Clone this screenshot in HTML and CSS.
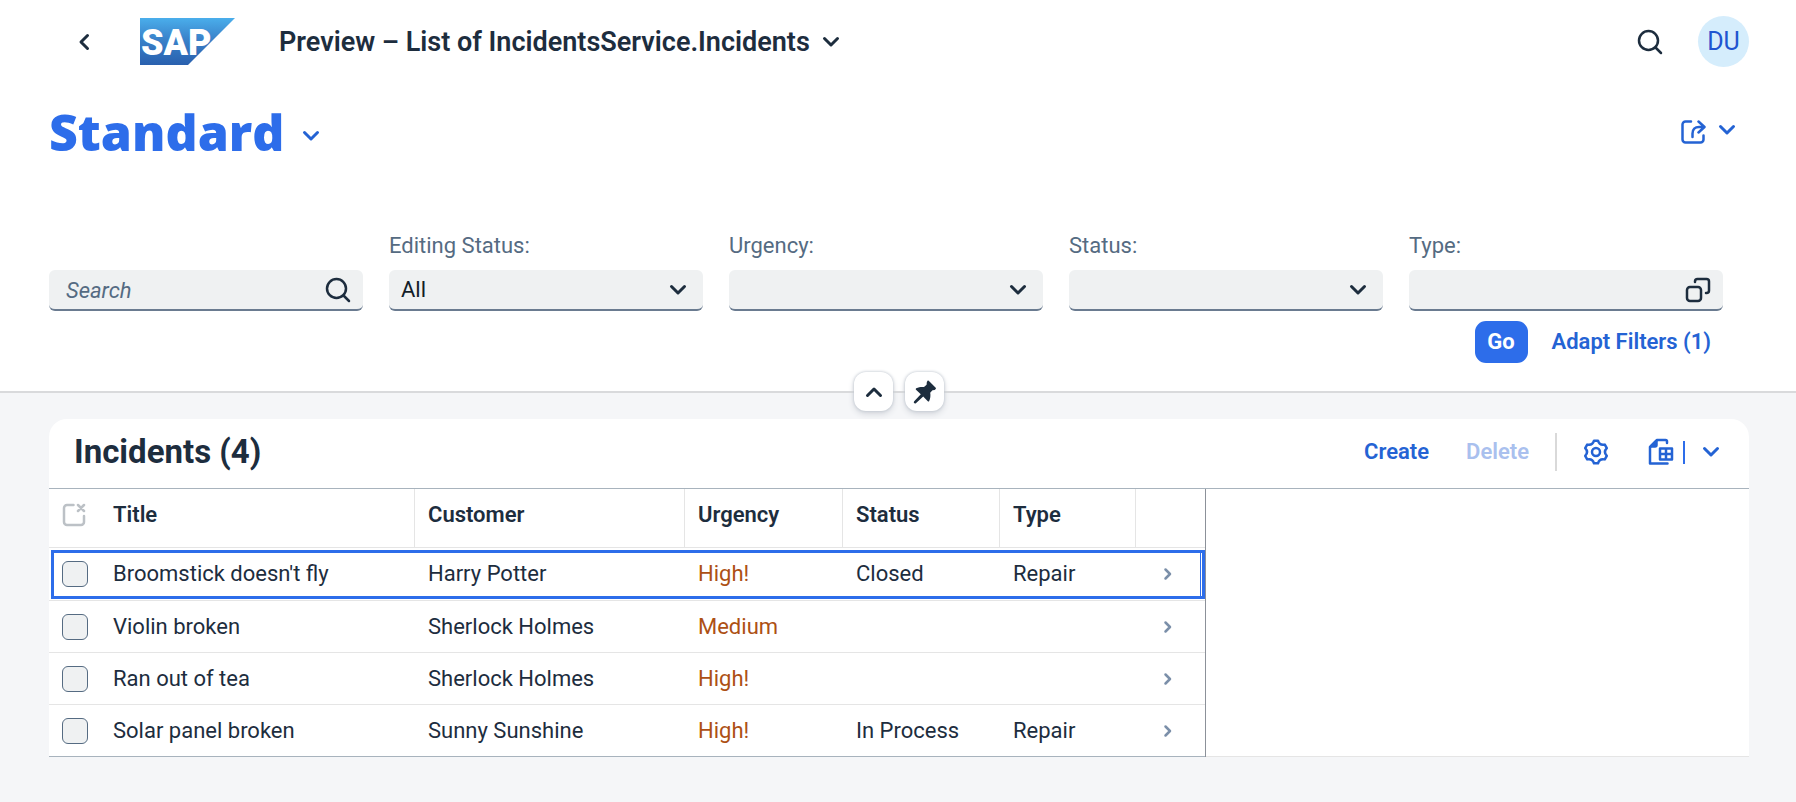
FILE: index.html
```html
<!DOCTYPE html>
<html lang="en">
<head>
<meta charset="utf-8">
<title>Preview – List of IncidentsService.Incidents</title>
<link rel="stylesheet" href="styles.css">
</head>
<body>
<svg class="defs" aria-hidden="true">
  <symbol id="chevron" viewBox="0 0 18 12"><path d="M2.500 2.500 9 9l6.500-6.500"/></symbol>
  <symbol id="search" viewBox="0 0 26 26"><circle cx="11.500" cy="11.500" r="9.500"/><path d="m18.500 18.500 5.500 5.500"/></symbol>
</svg>
<header class="shell">
  <button class="icon-btn back" aria-label="Back"><svg width="12" height="18" viewBox="0 0 12 18"><path d="M9.500 2.500 3 9l6.500 6.500"/></svg></button>
  <a class="logo" href="#" aria-label="SAP">
    <svg width="95" height="47" viewBox="0 0 95 47">
      <defs><linearGradient id="sap" x1="0" y1="0" x2="0" y2="1"><stop offset="0" stop-color="#4aaeeb"/><stop offset=".45" stop-color="#3a82ca"/><stop offset="1" stop-color="#2960ae"/></linearGradient></defs>
      <path class="logo-shape" fill="url(#sap)" d="M0 0h95L48 47H0z"/>
      <text class="logo-text" x="1" y="37">SAP</text>
    </svg>
  </a>
  <button class="app-title">Preview – List of IncidentsService.Incidents <svg width="18" height="12"><use href="#chevron"/></svg></button>
  <button class="icon-btn shell-search" aria-label="Search"><svg width="26" height="26"><use href="#search"/></svg></button>
  <button class="avatar">DU</button>
</header>

<section class="page-header">
  <div class="variant-row">
    <h1 class="variant">Standard</h1>
    <button class="icon-btn blue variant-arrow" aria-label="Select view"><svg width="18" height="12"><use href="#chevron"/></svg></button>
    <button class="icon-btn blue share" aria-label="Share">
      <svg width="26" height="26" viewBox="0 0 26 26"><path d="M11 2.500H5.500a3 3 0 0 0-3 3v15a3 3 0 0 0 3 3h15a3 3 0 0 0 3-3v-4M12.500 18v-3.500c0-4 2.500-6.500 6.500-6.500h4.500M18.500 2.500 24.500 8l-6 5.500"/></svg>
      <svg width="18" height="12"><use href="#chevron"/></svg>
    </button>
  </div>

  <form class="filters" onsubmit="return false">
    <div class="field search-field">
      <div class="control"><input class="input" type="search" placeholder="Search" aria-label="Search"><svg class="glyph" width="26" height="26"><use href="#search"/></svg></div>
    </div>
    <div class="field">
      <label for="editing">Editing Status:</label>
      <div class="control"><select class="input" id="editing"><option>All</option></select><svg class="glyph arrow" width="18" height="12"><use href="#chevron"/></svg></div>
    </div>
    <div class="field">
      <label for="urgency">Urgency:</label>
      <div class="control"><select class="input" id="urgency"><option></option></select><svg class="glyph arrow" width="18" height="12"><use href="#chevron"/></svg></div>
    </div>
    <div class="field">
      <label for="status">Status:</label>
      <div class="control"><select class="input" id="status"><option></option></select><svg class="glyph arrow" width="18" height="12"><use href="#chevron"/></svg></div>
    </div>
    <div class="field">
      <label for="type">Type:</label>
      <div class="control"><input class="input" id="type" type="text"><svg class="glyph" width="26" height="26" viewBox="0 0 26 26"><rect x="2" y="10" width="14" height="14" rx="3"/><path d="M10 5V4.500a2.500 2.500 0 0 1 2.500-2.500h9A2.500 2.500 0 0 1 24 4.500v9a2.500 2.500 0 0 1-2.500 2.500H21"/></svg></div>
    </div>
    <div class="filter-actions">
      <button class="go">Go</button>
      <button class="link-btn" type="button">Adapt Filters (1)</button>
    </div>
  </form>

  <div class="header-toggles">
    <button class="toggle" aria-label="Collapse header"><svg class="up" width="18" height="12"><use href="#chevron"/></svg></button>
    <button class="toggle" aria-label="Pin header"><svg class="pin" width="24" height="24" viewBox="0 0 24 24"><path d="M14.500.8q.6-.6 1.200 0l7 7q.6.600 0 1.200l-1 1-2.200.200-2.300 2.600c.5 2.800.200 5.500-1 8.200q-.6.900-1.400.200l-4.600-4.800-7.300 6.800q-1 .8-1.800-.1t.1-1.800l6.600-7L3 9.700q-.8-.8.200-1.400C6 7 8.300 6.700 11 7l2.600-2.200.2-2.600z"/></svg></button>
  </div>
</section>

<main class="content">
  <section class="card">
    <div class="toolbar">
      <h2 class="table-title">Incidents (4)</h2>
      <button class="link-btn">Create</button>
      <button class="link-btn delete" disabled>Delete</button>
      <span class="separator"></span>
      <button class="icon-btn blue gear" aria-label="Settings"><svg width="26" height="26" viewBox="0 0 26 26"><path d="M11 1.700h4Q16.550 6.850 21.800 5.600l2 3.500Q20.100 13 23.800 16.900l-2 3.500Q16.550 19.150 15 24.300h-4Q9.450 19.150 4.200 20.400l-2-3.500Q5.900 13 2.200 9.100l2-3.500Q9.450 6.850 11 1.700z"/><circle cx="13" cy="13" r="4"/></svg></button>
      <button class="icon-btn blue export" aria-label="Export"><svg width="26" height="28" viewBox="0 0 26 28"><path d="M19 5V3.500Q19 2 17.500 2H9L2 9v16.500h17.500"/><path fill="currentColor" d="M8.500 3 3 8.500h4q1.500 0 1.500-1.500z"/><path d="M12 10.500h12v11H12zM18 10.500v11M12 16h12"/></svg></button>
      <span class="split"></span>
      <button class="icon-btn blue menu" aria-label="Export options"><svg width="18" height="12"><use href="#chevron"/></svg></button>
    </div>
    <div class="table-area">
      <table class="table">
        <colgroup><col class="c-sel"><col class="c-title"><col class="c-cust"><col class="c-urg"><col class="c-stat"><col class="c-type"><col class="c-nav"></colgroup>
        <thead>
          <tr><th class="sel"><svg class="deselect" width="24" height="24" viewBox="0 0 24 24"><path d="M11.500 2H5a3 3 0 0 0-3 3v14a3 3 0 0 0 3 3h14a3 3 0 0 0 3-3v-6M16 2l6 6M22 2l-6 6"/></svg></th><th class="first">Title</th><th>Customer</th><th>Urgency</th><th>Status</th><th>Type</th><th class="last"></th></tr>
        </thead>
        <tbody>
          <tr class="focused"><td class="sel"><input class="check" type="checkbox" aria-label="Broomstick doesn't fly"></td><td>Broomstick doesn't fly</td><td>Harry Potter</td><td class="critical">High!</td><td>Closed</td><td>Repair</td><td class="nav"><svg width="10" height="14" viewBox="0 0 10 14"><path d="m2.500 2.500 4.500 4.500-4.500 4.500"/></svg></td></tr>
          <tr><td class="sel"><input class="check" type="checkbox" aria-label="Violin broken"></td><td>Violin broken</td><td>Sherlock Holmes</td><td class="critical">Medium</td><td></td><td></td><td class="nav"><svg width="10" height="14" viewBox="0 0 10 14"><path d="m2.500 2.500 4.500 4.500-4.500 4.500"/></svg></td></tr>
          <tr><td class="sel"><input class="check" type="checkbox" aria-label="Ran out of tea"></td><td>Ran out of tea</td><td>Sherlock Holmes</td><td class="critical">High!</td><td></td><td></td><td class="nav"><svg width="10" height="14" viewBox="0 0 10 14"><path d="m2.500 2.500 4.500 4.500-4.500 4.500"/></svg></td></tr>
          <tr><td class="sel"><input class="check" type="checkbox" aria-label="Solar panel broken"></td><td>Solar panel broken</td><td>Sunny Sunshine</td><td class="critical">High!</td><td>In Process</td><td>Repair</td><td class="nav"><svg width="10" height="14" viewBox="0 0 10 14"><path d="m2.500 2.500 4.500 4.500-4.500 4.500"/></svg></td></tr>
        </tbody>
      </table>
    </div>
  </section>
</main>
</body>
</html>
```
FILE: styles.css
```css
* { box-sizing: border-box; }

body {
  margin: 0;
  min-height: 100vh;
  background: #f5f6f8;
  color: #1d2d3e;
  font-family: Roboto, "Liberation Sans", sans-serif;
  font-size: 22px;
  line-height: 28px;
}

.defs { position: absolute; width: 0; height: 0; }

svg {
  display: block;
  flex: none;
  fill: none;
  stroke: currentColor;
  stroke-width: 2.5;
  stroke-linecap: round;
  stroke-linejoin: round;
}

button {
  display: flex;
  align-items: center;
  padding: 0;
  border: 0;
  background: none;
  color: inherit;
  font: inherit;
}

.blue { color: #2463d4; }

/* Shell bar */
.shell {
  display: flex;
  align-items: center;
  height: 83px;
  padding: 0 47px 0 78px;
  background: #fff;
}
.back svg { stroke-width: 3; }
.logo { margin-left: 50px; }
.logo svg { overflow: visible; }
.logo-shape { stroke: none; }
.logo-text { fill: #fff; stroke: none; font-size: 36px; font-weight: 900; }
.app-title { gap: 12px; margin-left: 44px; font-size: 27px; font-weight: 600; }
.app-title svg { stroke-width: 3; }
.shell-search { margin-left: auto; }
.avatar {
  justify-content: center;
  width: 51px;
  height: 51px;
  margin-left: 35px;
  border-radius: 50%;
  background: #d5edfc;
  color: #2055d0;
  font-size: 25px;
}

/* Page header */
.page-header {
  position: relative;
  height: 310px;
  border-bottom: 2px solid #d9dadc;
  background: #fff;
}
.variant-row {
  display: flex;
  align-items: center;
  height: 98px;
  padding: 0 60px 0 49px;
}
.variant { margin: 0; color: #2d6dea; font-family: "Open Sans", sans-serif; font-size: 50px; font-weight: 800; line-height: 60px; }
.variant-arrow { margin-left: 18px; padding-top: 8px; }
.share { align-items: flex-start; gap: 12px; margin-left: auto; }
.share svg:last-child { margin-top: 5px; }
.variant-arrow svg, .share svg:last-child { stroke-width: 3; }

.filters {
  display: grid;
  grid-template-columns: repeat(5, 1fr);
  column-gap: 26px;
  row-gap: 10px;
  padding: 51px 73px 0 49px;
}
.field { display: flex; flex-direction: column; justify-content: flex-end; gap: 10px; color: #556b82; }
.control { position: relative; color: #1d2d3e; }
.input {
  display: block;
  width: 100%;
  height: 41px;
  padding: 1px 12px 0;
  appearance: none;
  border: 0;
  border-bottom: 2px solid #6a7b90;
  border-radius: 6px;
  background: #eff1f2;
  color: #131e29;
  font: inherit;
}
.search-field .input { padding-left: 17px; }
.input::placeholder { color: #556b82; font-style: italic; opacity: 1; }
.glyph { position: absolute; top: 7px; right: 12px; pointer-events: none; }
.arrow { top: 14px; right: 16px; stroke-width: 3; }

.filter-actions {
  grid-column: 1 / -1;
  display: flex;
  justify-content: flex-end;
  gap: 24px;
  padding-right: 12px;
}
.go {
  justify-content: center;
  width: 53px;
  height: 42px;
  border-radius: 11px;
  background: #2d6dea;
  color: #fff;
  font-weight: 700;
}
.link-btn { color: #2463d4; font-weight: 600; }

.header-toggles {
  position: absolute;
  right: 0;
  bottom: -20px;
  left: 2px;
  display: flex;
  justify-content: center;
  gap: 12px;
}
.toggle {
  justify-content: center;
  width: 39px;
  height: 39px;
  border-radius: 12px;
  background: #fff;
  box-shadow: 0 0 3px #b9c0ca, 0 3px 6px #d3d6dc;
}
.up { transform: rotate(180deg); stroke-width: 3; }
.pin { fill: currentColor; stroke: none; }

/* Table card */
.content { padding: 26px 47px 44px 49px; }
.card { overflow: hidden; border-radius: 18px 18px 0 0; background: #fff; }
.toolbar {
  display: flex;
  align-items: center;
  height: 70px;
  padding: 0 29px 3px 25px;
  border-bottom: 1px solid #a8b3bd;
}
.table-title { flex: 1; margin: 0; font-size: 33px; font-weight: 700; line-height: 36px; }
.delete { margin-left: 37px; color: #a9c0ee; }
.separator { width: 2px; height: 38px; margin-left: 26px; background: #d9d9d9; }
.gear { margin-left: 26px; }
.export { margin-left: 39px; }
.split { width: 2px; height: 23px; margin-left: 9px; background: #2d6dea; }
.menu { margin-left: 17px; }
.menu svg { stroke-width: 3; }

.table-area { border-bottom: 1px solid #e5e5e5; }
.table {
  width: 1157px;
  margin-bottom: -1px;
  table-layout: fixed;
  border-spacing: 0;
  border-right: 1px solid #8c9199;
}
.c-sel { width: 51px; }
.c-title { width: 315px; }
.c-cust { width: 270px; }
.c-urg { width: 158px; }
.c-stat { width: 157px; }
.c-type { width: 136px; }
.c-nav { width: 69px; }

th, td { padding: 0 0 0 13px; border-bottom: 1px solid #e5e5e5; text-align: left; }
th { height: 59px; padding-bottom: 6px; border-right: 1px solid #e5e5e5; font-weight: 600; }
th.sel, th.last { border-right: 0; }
td { height: 52px; }
.focused td { height: 53px; }
tbody tr:last-child td { border-bottom-color: #a8b3bd; }
.deselect { color: #bcc1c6; }
.check {
  display: block;
  width: 26px;
  height: 26px;
  margin: 0;
  appearance: none;
  border: 1px solid #556b82;
  border-radius: 6px;
  background: #eff1f2;
}
.critical { color: #ad5014; }
.nav { padding-left: 27px; color: #7b8fa9; }

.focused { position: relative; }
.focused::after {
  content: "";
  position: absolute;
  inset: 2px 0 2px 2px;
  border: 3px solid #2d6dea;
  box-shadow: inset -1px 0 #fff, inset -2px 0 #2d6dea;
  pointer-events: none;
}
```
